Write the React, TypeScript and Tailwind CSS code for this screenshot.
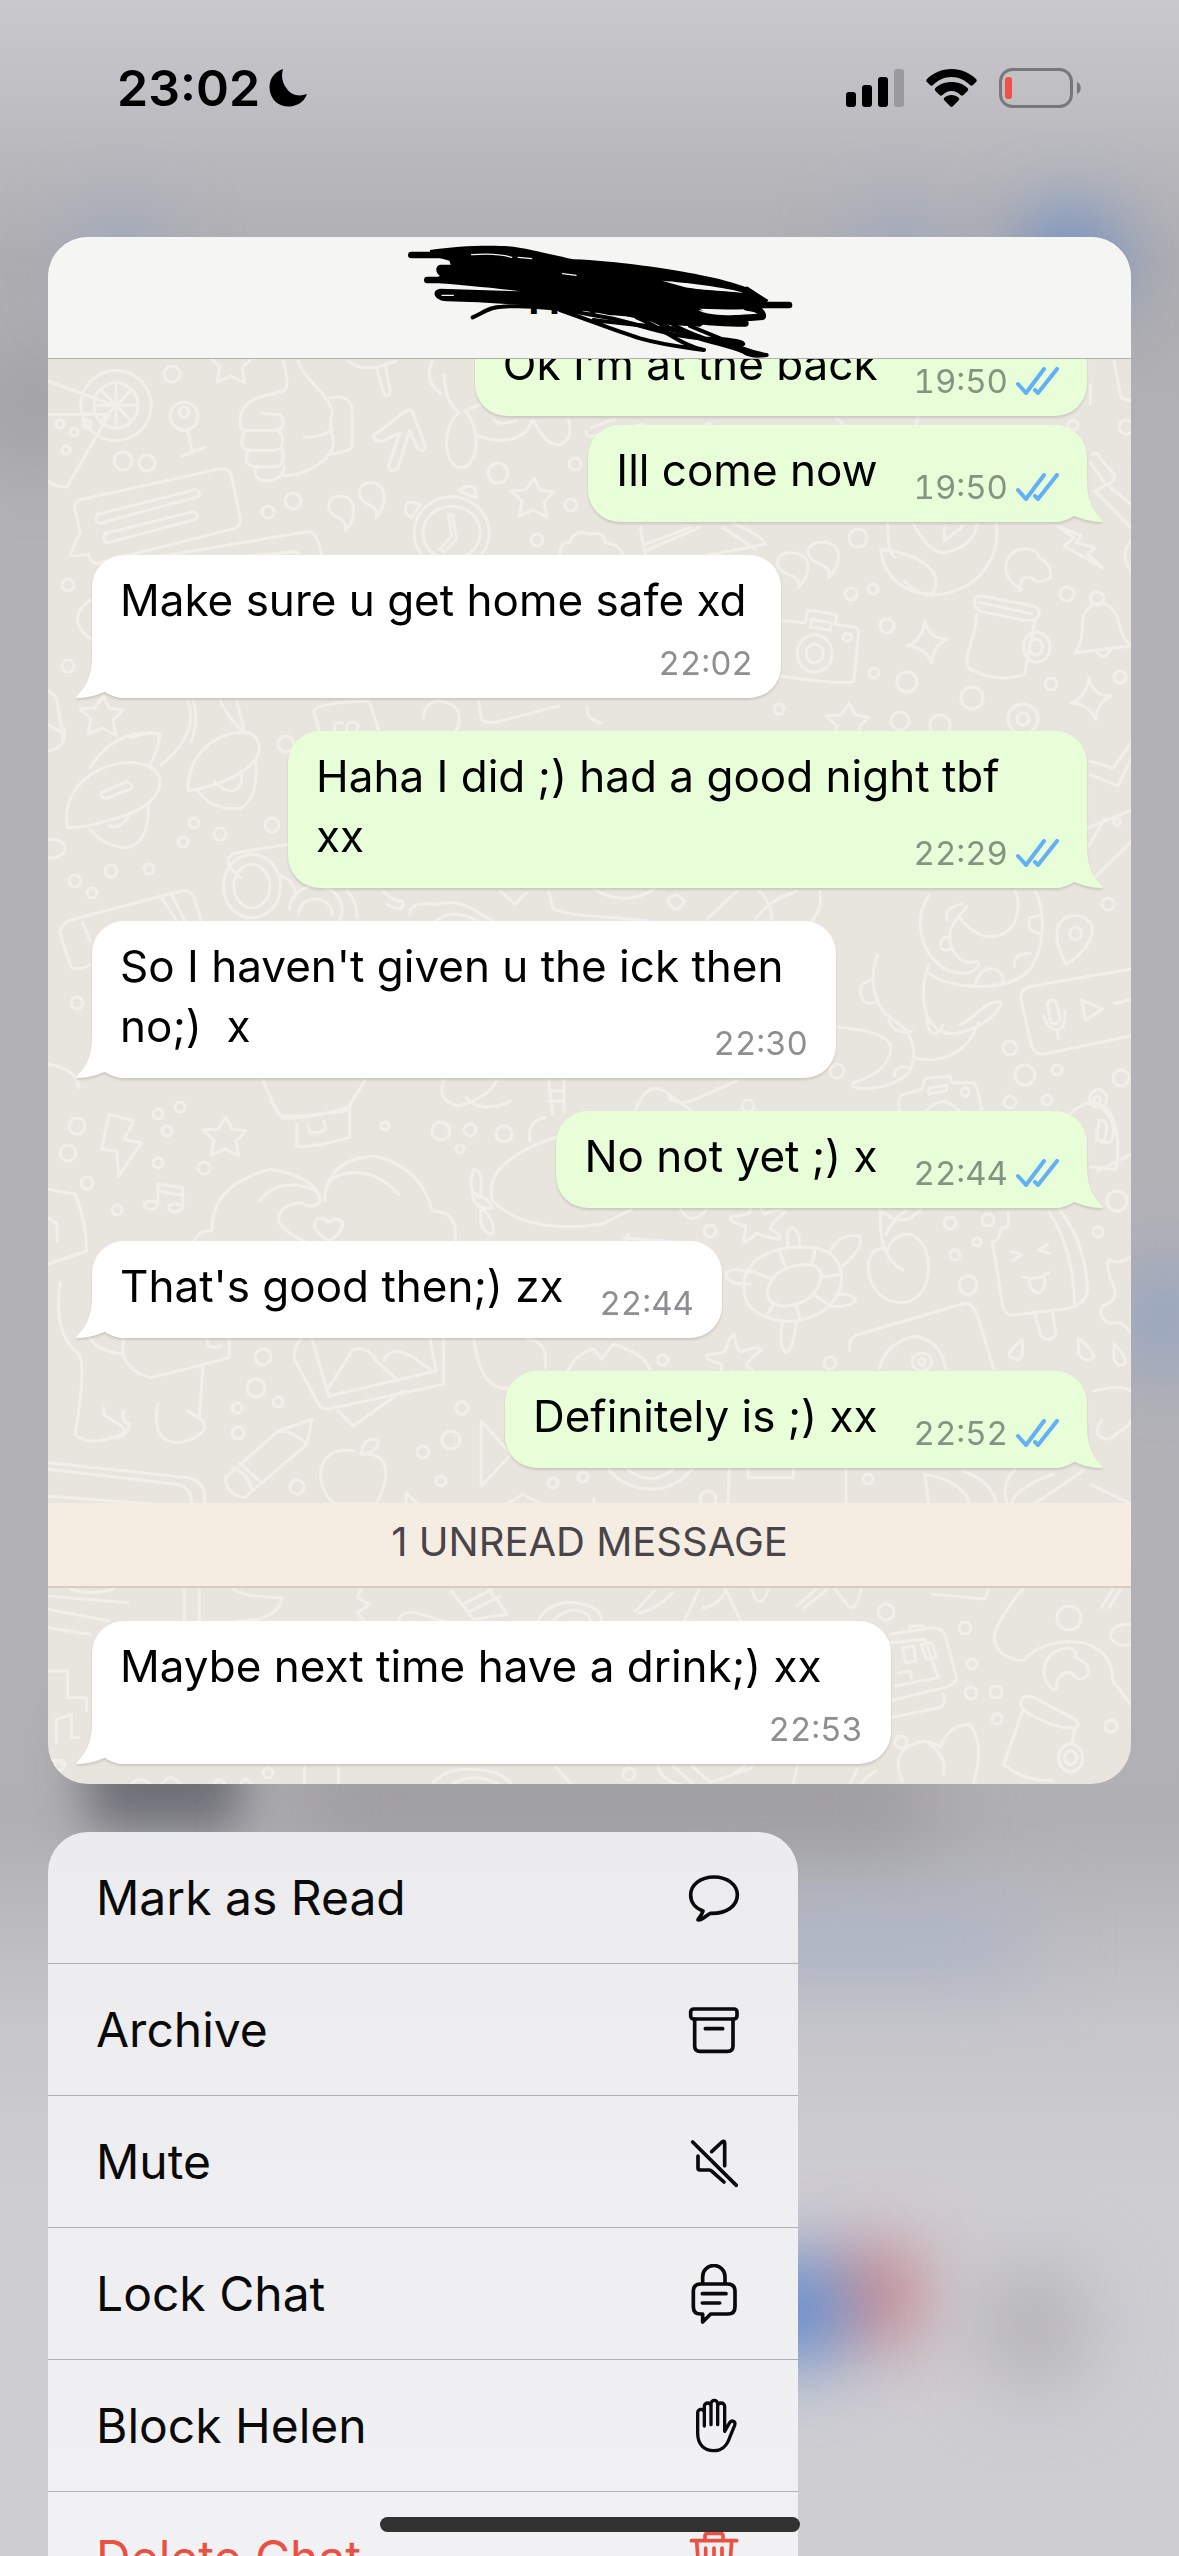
import type { ReactNode } from 'react';
import clsx from 'clsx';

type Layout = 'inline' | 'stacked' | 'wrapped';

interface Message {
  text: string;
  time: string;
  mine?: boolean;
  tail?: boolean;
  layout: Layout;
  className: string;
}

const MESSAGES: Message[] = [
  { text: 'Ok I’m at the back', time: '19:50', mine: true, tail: false, layout: 'inline', className: '-mt-10' },
  { text: 'Ill come now', time: '19:50', mine: true, layout: 'inline', className: 'mt-[9px]' },
  { text: 'Make sure u get home safe xd', time: '22:02', layout: 'stacked', className: 'mt-[33px] w-[689px]' },
  { text: 'Haha I did ;) had a good night tbf xx', time: '22:29', mine: true, layout: 'wrapped', className: 'mt-[33px] w-[799px]' },
  { text: "So I haven't given u the ick then no;)  x", time: '22:30', layout: 'wrapped', className: 'mt-[33px] w-[744px]' },
  { text: 'No not yet ;) x', time: '22:44', mine: true, layout: 'inline', className: 'mt-[33px]' },
  { text: "That's good then;) zx", time: '22:44', layout: 'inline', className: 'mt-[33px]' },
  { text: 'Definitely is ;) xx', time: '22:52', mine: true, layout: 'inline', className: 'mt-[33px]' },
];

const UNREAD: Message = {
  text: 'Maybe next time have a drink;) xx',
  time: '22:53',
  layout: 'stacked',
  className: 'mt-[33px] w-[799px]',
};

/* ---------- status bar ---------- */

function StatusBar() {
  return (
    <div className="flex h-[237px] shrink-0 items-start justify-between pt-[57px] pr-[97px] pl-[117px]">
      <div className="flex h-[62px] items-center gap-2">
        <span className="text-[50px] leading-[62px] font-semibold">23:02</span>
        <svg className="h-10 w-10" viewBox="0 0 40 40" aria-hidden="true">
          <path d="M15 1C3 5-1 17 3 27c4 10 15 14 25 10 6-2 9-6 11-11-8 3-16 1-20-5-5-6-6-13-4-20z" />
        </svg>
      </div>
      <div className="flex h-[62px] items-center gap-[22px]">
        <svg className="h-[38px] w-[58px]" viewBox="0 0 58 38" aria-hidden="true">
          <rect x="0" y="23" width="10" height="15" rx="3" />
          <rect x="16" y="16" width="10" height="22" rx="3" />
          <rect x="32" y="8" width="10" height="30" rx="3" />
          <rect x="48" y="0" width="10" height="38" rx="3" fill="#9a9a9d" />
        </svg>
        <svg className="h-[38px] w-[51px]" viewBox="0 0 51 38" aria-hidden="true">
          <path d="M25.500 0C35 0 44 4 50 10c1 1 1 2 0 3l-3 3c-1 1-2 1-3 0-5-5-11-8-18.500-8S12 11 7 16c-1 1-2 1-3 0l-3-3c-1-1-1-2 0-3C7 4 16 0 25.500 0z" />
          <path d="M25.500 13c6 0 12 2 16 6 1 1 1 2 0 3l-4 4c-1 1-2 1-3 0-2-2-5-4-9-4s-7 2-9 4c-1 1-2 1-3 0l-4-4c-1-1-1-2 0-3 4-4 10-6 16-6z" />
          <path d="M25.500 26c3 0 5 1 7 2.500 1 1 1 2 0 3l-6 6c-1 .7-1.500.7-2 0l-6-6c-1-1-1-2 0-3 2-1.500 4-2.500 7-2.500z" />
        </svg>
        <svg className="h-10 w-[83px]" viewBox="0 0 83 40" aria-hidden="true">
          <rect x="1.500" y="1.500" width="71" height="37" rx="12" fill="none" stroke="#78777c" strokeWidth="3" />
          <path d="M78 14c5 2 5 10 0 12z" fill="#78777c" />
          <rect x="6" y="9" width="7" height="22" rx="3" fill="#ee5244" />
        </svg>
      </div>
    </div>
  );
}

/* ---------- blurred chat list behind the preview ---------- */

function Backdrop() {
  return (
    <div className="absolute inset-0 bg-[linear-gradient(180deg,#c9c8cd_0px,#bdbcc1_120px,#aeadb1_260px,#b2b1b6_500px,#b2b1b6_1500px,#b0afb3_1820px,#c6c5ca_2020px,#cecdd2_2200px,#cecdd2_100%)]">
      <div className="absolute top-[350px] -left-4 h-28 w-24 rounded-full bg-[#9d9da2] blur-2xl" />
      <div className="absolute top-[225px] left-[80px] h-16 w-20 rounded-full bg-[#8ea4c4] blur-2xl" />
      <div className="absolute top-[225px] left-[860px] h-16 w-20 rounded-full bg-[#8fa4c8] blur-2xl" />
      <div className="absolute top-[220px] left-[1030px] h-20 w-20 rounded-full bg-[#3f78cc] blur-2xl" />
      <div className="absolute top-[1270px] -right-8 h-24 w-24 rounded-full bg-[#8ea2c4] blur-2xl" />
      <div className="absolute top-[1720px] left-[85px] h-28 w-[160px] rounded-3xl bg-[#6f7077] blur-xl" />
      <div className="absolute top-[1740px] left-[290px] h-28 w-[640px] rounded-3xl bg-[#9e9da1] blur-2xl" />
      <div className="absolute top-[1914px] left-[700px] h-14 w-[330px] rounded-3xl bg-[#a8b3c8] blur-2xl" />
      <div className="absolute top-[2255px] left-[835px] h-20 w-20 rounded-full bg-[#c4555c] blur-2xl" />
      <div className="absolute top-[2262px] left-[735px] h-24 w-28 rounded-full bg-[#4279cf] blur-2xl" />
      <div className="absolute top-[2270px] left-[985px] h-28 w-24 rounded-full bg-[#aeadb2] blur-2xl" />
    </div>
  );
}

/* ---------- wallpaper ---------- */

// [x, y, radius]
const RINGS = [
  [124, 15, 8], [75, 102, 9], [99, 104, 8], [12, 65, 4], [39, 65, 4], [26, 73, 4], [18, 91, 4], [220, 153, 6],
  [245, 142, 8], [450, 114, 10], [527, 105, 6], [523, 146, 6], [489, 181, 6], [20, 226, 6], [20, 307, 6],
  [810, 179, 9], [803, 235, 6], [825, 230, 5], [839, 267, 7], [859, 323, 10], [826, 314, 5], [924, 339, 11],
  [1003, 325, 6], [1019, 235, 7], [1072, 318, 6], [731, 350, 5], [1025, 66, 5], [1078, 68, 7], [238, 385, 8],
  [146, 464, 5], [172, 475, 6], [135, 483, 5], [224, 466, 7], [63, 512, 6], [101, 510, 5], [27, 522, 6],
  [44, 534, 5], [29, 644, 6], [852, 362, 9], [892, 366, 10], [975, 360, 15], [975, 360, 6], [1060, 545, 6],
  [962, 689, 7], [977, 716, 10], [1009, 711, 5], [962, 743, 6], [999, 741, 5], [789, 712, 7], [700, 747, 6],
  [1069, 842, 10], [662, 872, 6], [902, 864, 6], [940, 861, 6], [929, 883, 4], [907, 896, 5], [920, 926, 9],
  [1050, 873, 5], [782, 1004, 6], [615, 1001, 5], [1073, 719, 8], [29, 767, 8], [110, 755, 5], [132, 748, 5],
  [20, 794, 8], [119, 772, 5], [110, 804, 5], [156, 809, 6], [39, 824, 6], [69, 851, 5], [393, 772, 9],
  [422, 771, 6], [456, 775, 8], [337, 767, 4], [412, 790, 4], [215, 998, 8], [208, 1029, 9], [230, 1043, 5],
  [189, 1049, 5], [190, 1074, 6], [414, 1049, 6], [403, 1081, 9], [375, 1093, 6], [393, 1122, 5],
  [249, 1128, 7], [505, 1124, 5], [535, 1118, 5], [820, 1120, 5], [660, 1140, 8], [838, 1253, 8],
  [917, 1269, 6], [924, 1305, 5], [923, 1334, 6], [948, 1333, 6], [949, 1360, 5], [853, 1383, 6],
  [1063, 1367, 6], [1021, 1259, 12], [581, 1415, 6], [220, 1414, 5], [12, 1406, 5],
];

const STARS = [[484, 139], [182, 5], [53, 357], [799, 364], [176, 778]];
const SPARKLES = [[879, 284], [1043, 341]];
const STARFISH = [[707, 862], [683, 1000]];

function Doodles({ transform, paths }: { transform: string; paths: string[] }) {
  return (
    <g transform={transform} className="*:[vector-effect:non-scaling-stroke]">
      {paths.map((d) => (
        <path key={d} d={d} />
      ))}
    </g>
  );
}

const COMMA = 'c5-25-10-35-20-40c-35-15-30-65 5-65c45 0 45 65 15 105z';

function Wallpaper() {
  return (
    <svg
      className="absolute inset-0 h-full w-full"
      viewBox="0 0 1083 1426"
      preserveAspectRatio="xMidYMin slice"
      fill="none"
      stroke="#f2efea"
      strokeWidth="3"
      strokeLinecap="round"
      strokeLinejoin="round"
      aria-hidden="true"
    >
      {RINGS.map(([x, y, r]) => (
        <circle key={`${x}-${y}-${r}`} cx={x} cy={y} r={r} />
      ))}
      {STARS.map(([x, y]) => (
        <path key={x} transform={`translate(${x} ${y})`} d="M2-20 8-8 22-6 12 4 15 19 1 12-13 18-10 3-21-7-6-8z" />
      ))}
      {SPARKLES.map(([x, y]) => (
        <path key={x} transform={`translate(${x} ${y})`} d="M-2-22Q2-4 20-4 6 2 5 20-2 4-20 3-5-2-2-22z" />
      ))}
      {STARFISH.map(([x, y]) => (
        <path key={x} transform={`translate(${x} ${y})`} d="M3-25Q6-8 10-7 28-14 30-9 14 4 16 8 30 16 24 18 8 16 2 12-12 24-12 20-8 8-10 5-28 0-24-4-8-6-6-8-2-22 3-25z" />
      ))}

      {/* fruit, thumb, speech card, alarm clock */}
      <Doodles
        transform="translate(-48 2) scale(.3827 .3333)"
        paths={[
          'M125 60 290 130M125 160H285L175 378Q150 380 125 360',
          'M211 133a92 105 0 1 1 0 1M245 133a58 68 0 1 1 0 1M303 70V195M245 133H360M262 85 345 182M345 85 262 182',
          'M445 165a36 42 0 1 1 0 1M469 152a12 16 0 1 1 0 1M490 208 502 270M475 285 535 260',
          'M780 0C790 50 850 90 865 140M740 0Q760 80 740 90C690 105 640 110 628 165V190Q625 205 640 208H720Q742 205 740 180 740 160 715 160L680 157',
          'M640 208Q620 260 650 268H720Q742 265 738 235 740 215 720 208M650 268Q630 310 665 317H725Q745 310 738 268M668 318Q660 360 700 360 745 350 742 318',
          'M742 345C820 340 880 280 870 230Q860 200 868 150M795 228Q840 230 868 205M860 110Q920 100 920 150V250Q920 275 865 278',
          'M975 225 1060 150Q1075 140 1080 160L1112 255Q1105 280 1090 260L1070 210 1040 320Q1020 340 1015 315L1045 215 1000 240Q980 245 975 225z',
          'M195 440Q195 420 215 415L570 325Q600 320 605 345L628 475Q628 500 605 505L260 605Q240 615 232 580L185 585Q180 580 210 515z',
          'M255 460 510 386Q525 390 520 406L262 487Q245 485 255 460zM275 517 505 452Q520 458 513 475L282 545Q265 540 275 517z',
          'M400 590 800 512Q830 505 840 585M600 590 770 572Q785 575 780 590',
          `M903 510${COMMA}`,
          `M983 470${COMMA}`,
          'M1082 515a98 108 0 1 1 0 1M1105 515a75 80 0 1 1 0 1M1172 460 1180 525 1150 565 1162 572 1193 535 1182 460z',
          'M1060 455Q1055 425 1075 423L1098 430 1075 472zM1200 390Q1215 370 1240 380L1245 410z',
          'M910 0Q950 40 1035 0M985 25 1003 98Q1012 110 1020 95L1008 20',
          'M1130 0Q1105 60 1150 95M1160 40Q1165 130 1200 155M1200 155C1150 200 1160 320 1205 320S1260 200 1215 150L1255 130M1250 225C1310 250 1370 240 1390 180M1395 180Q1430 260 1465 250 1500 230 1485 175M1290 178Q1310 195 1350 178',
          'M240 715C190 750 190 800 240 835M125 990Q150 1000 152 1040L165 1140M125 1090 160 1115M340 1130Q420 1105 418 1125L415 1140M505 1018Q520 1080 500 1140M575 1018Q600 1080 640 1115M820 1050Q825 1025 965 1020L990 1110M820 1050 835 1115M875 1110Q870 1080 895 1085M905 1110Q905 1075 932 1085 940 1100 930 1115',
          'M1105 1075Q1110 1018 1150 1020 1200 1030 1200 1070 1200 1110 1180 1115M1250 1018 1258 1075Q1265 1085 1290 1085L1460 1035M1535 1040Q1530 1075 1570 1085',
        ]}
      />

      {/* camera, mug, bell */}
      <Doodles
        transform="translate(392 -18) scale(.4713 .3333)"
        paths={[
          'M722 838 775 845 780 810Q785 805 842 822L838 850 880 858Q890 865 888 880L878 1020Q870 1035 722 1005',
          'M758 937a37 56 0 1 1 0 1M777 937a18 28 0 1 1 0 1M788 835 830 845 828 868 786 858zM855 888a9 12 0 1 1 0 1',
          'M1135 785Q1130 765 1150 765L1260 795Q1275 805 1270 825 1262 842 1240 838L1150 812Q1135 805 1135 785zM1145 785 1255 818M1138 820C1140 880 1110 940 1120 980Q1180 1030 1240 1000L1262 840',
          'M1238 918a28 45 0 1 1 0 1M1250 918a14 24 0 1 1 0 1',
          'M1348 935C1375 880 1350 830 1380 795Q1400 775 1425 800C1450 840 1435 880 1466 915zM1395 935Q1410 960 1422 928M1380 772a14 20 0 1 1 0 1',
          `M760 740${COMMA}`,
          `M825 708${COMMA}`,
          'M950 545C950 600 955 640 965 650M985 720Q1020 770 1050 762C1150 750 1190 640 1180 545M935 625C940 700 980 760 1045 758 1070 700 1030 640 935 625zM1005 550Q1040 640 1070 635 1130 620 1140 550M1070 600V560M1070 600 1110 555',
          'M1310 555 1360 585 1350 605 1390 620 1375 640 1405 680 1325 615 1345 590z',
          'M1235 745C1190 720 1190 640 1230 625Q1270 620 1270 650 1300 670 1295 710 1270 735 1255 710 1230 700 1230 750z',
          'M255 640Q255 600 275 605 285 560 320 580 350 570 350 605 385 610 388 645M425 560 435 640M435 610 530 560M435 630 550 560M600 560 670 625M620 545Q690 590 690 610L560 645',
          'M1385 340Q1395 330 1400 350L1430 400Q1435 420 1415 430L1390 450M1380 365 1410 425M1390 450 1466 560M1415 430 1466 490M1380 190V130M1430 60 1445 170 1466 180',
          'M310 270Q310 290 330 285L430 250M320 260 370 235M840 230 855 250M1010 250 1015 230M560 260Q570 235 580 260M1466 600Q1440 640 1466 690',
        ]}
      />

      {/* rocket, leaves, lens */}
      <Doodles
        transform="translate(-48 342) scale(.7519 .3333)"
        paths={[
          'M90 380C80 280 120 180 180 185 230 200 220 300 170 340Q120 380 90 380zM120 200Q150 90 205 95 220 100 200 190M135 275 168 242Q178 250 174 264L142 292Q132 290 135 275M120 385Q140 440 170 440 200 420 197 310M145 375Q160 390 172 340',
          'M250 270C250 150 290 90 330 95 360 120 350 230 250 270zM262 265Q280 330 320 322 345 290 340 170M285 240Q300 280 315 265 325 240 320 210M250 0Q265 100 215 190M315 0 325 90M64 150Q90 140 85 80',
          'M305 500Q300 460 315 455L383 430M305 500 320 530M297 555a38 95 0 1 1 0 1M311 555a24 65 0 1 1 0 1M370 520Q395 540 392 590M385 625a35 70 0 0 1 70 0Q455 650 450 660M397 640a22 45 0 0 1 45 0M64 415Q90 415 86 450 80 475 64 470',
          'M80 700Q78 680 90 660L240 570Q255 565 258 590L268 660M215 590 235 660M228 580 246 660M80 700 95 800Q105 810 122 790M110 665 120 720',
          'M462 570Q475 600 475 650M510 570Q520 600 535 600 540 640 515 610M545 640Q545 600 580 610 610 590 640 640L655 660M580 660Q600 620 635 660M665 570 685 610 700 575M730 570 735 620Q740 640 820 650L860 660M790 565Q830 620 870 565M890 590Q900 570 910 600 900 650 888 600zM940 655 980 570M1005 655Q1020 600 1060 570M1010 570Q1030 620 1025 655M1090 570Q1095 620 1080 660',
          'M64 1090Q100 1100 105 1160M350 1140 370 1240Q375 1255 460 1230L485 1140M590 1140Q580 1200 610 1215 650 1190 660 1140M620 1190Q640 1240 680 1200M730 1140 735 1240M750 1140V1230M730 1170H750M730 1200H750M845 1230Q860 1130 890 1180L920 1230M890 1190Q900 1220 930 1190L980 1140',
        ]}
      />

      {/* dinosaur, pin, voice note, turtle, ice lolly */}
      <Doodles
        transform="translate(592 322) scale(.3438 .4464)"
        paths={[
          'M840 480C790 540 820 620 900 650 960 665 1000 640 980 628 930 640 900 600 900 570 905 540 930 530 950 505M930 530C990 590 1060 580 1090 540Q1110 500 1090 470M840 655C900 690 1060 700 1130 650 1180 600 1180 520 1150 470',
          'M840 635C810 700 820 780 900 790 980 790 1050 740 1050 720 1010 710 970 760 930 770M690 615C660 680 690 740 740 760 800 790 810 840 780 880 720 920 600 920 620 900 660 890 730 870 730 820 720 790 650 780 570 775M800 845C900 860 960 820 985 765',
          'M895 535Q880 510 935 500M905 600Q870 610 875 585 880 570 905 575M975 680Q990 640 1030 645 1060 650 1055 680M1090 640Q1080 610 1135 610M1160 565Q1120 560 1135 530L1165 525M835 755Q835 790 860 790 880 780 880 770M670 670Q630 680 645 710 660 730 690 718M725 760Q730 790 790 785M740 885Q740 860 780 865',
          'M1240 635C1200 580 1200 530 1265 525 1340 530 1330 590 1240 635zM1250 565a17 14 0 1 1 0 1',
          'M1428 645 1130 685Q1100 695 1110 720L1140 820Q1150 840 1180 835L1428 795M1185 725Q1190 710 1210 718L1222 755Q1215 775 1195 765zM1175 750Q1190 790 1225 778 1240 765 1235 740M1212 782 1218 800M1285 715 1345 735 1295 760zM1380 722 1428 714',
          'M755 965Q745 930 770 925L820 915 830 890 900 885 910 900 970 900Q980 900 995 965M830 965Q880 920 930 965M840 912 895 905 890 918 840 925zM935 920a11 9 0 1 1 0 1',
          'M1250 970Q1320 920 1370 970 1400 1020 1385 1095L1310 1088M1335 985Q1370 980 1350 1030H1328zM1308 935a25 20 0 1 1 0 1M1320 938a10 8 0 1 1 0 1',
          'M303 1370C290 1290 400 1260 510 1270 590 1280 600 1340 570 1380 530 1430 450 1440 400 1432 330 1420 310 1400 303 1370zM370 1370C380 1320 440 1305 500 1308 550 1320 520 1370 480 1388 420 1410 370 1400 370 1370z',
          'M320 1320 385 1340M405 1275 425 1315M510 1272 500 1308M585 1330 530 1335M550 1398 505 1375M465 1432 455 1400M370 1420 390 1395M430 1270 428 1240Q440 1210 462 1240L465 1268M550 1280Q590 1230 640 1245 650 1270 590 1310M318 1350Q260 1355 250 1330 260 1310 325 1325M570 1375Q620 1370 628 1390 600 1405 550 1400M415 1435Q400 1490 425 1505 445 1500 455 1435',
          'M720 1275C640 1250 640 1390 760 1393 860 1390 860 1260 790 1240Q740 1235 720 1275M700 1185Q690 1290 765 1320M775 1185Q730 1210 715 1240',
          'M1070 1190Q1080 1230 1050 1225 1040 1260 1025 1255L1055 1400Q1065 1425 1090 1420L1250 1405Q1310 1390 1300 1350 1290 1250 1220 1185M1190 1190Q1260 1270 1265 1400M1150 1420 1165 1465Q1185 1485 1210 1465L1200 1415',
          'M1080 1278 1110 1285 1085 1298M1185 1262 1160 1275 1190 1282M1115 1335Q1150 1345 1190 1325M1130 1338Q1135 1370 1160 1370 1185 1360 1175 1332',
          'M610 1500Q605 1475 630 1465L940 1395Q970 1390 985 1430L1030 1545M695 1540Q720 1480 800 1468 880 1480 890 1545M792 1525a28 20 0 1 1 0 1M810 1525a10 8 0 1 1 0 1',
          'M1110 1475Q1120 1520 1095 1520 1065 1515 1078 1500zM1275 1472Q1320 1500 1320 1515 1290 1530 1275 1505zM1380 1485Q1420 1520 1410 1530 1385 1540 1378 1515zM1428 1290Q1390 1310 1365 1295 1350 1310 1380 1360 1390 1390 1345 1400 1330 1430 1370 1440 1400 1430 1428 1460',
          'M1310 180 1375 195 1428 140M1310 210 1390 235 1428 175M1300 330 1428 290M1305 370 1350 310M1310 450 1428 360M1378 315a10 8 0 1 1 0 1',
        ]}
      />

      {/* bolt, notes, heart hands, cat, pencil */}
      <Doodles
        transform="translate(-48 742) scale(.7519 .3333)"
        paths={[
          'M145 40 178 60 165 115 188 125 158 225 155 150 135 145z',
          'M210 310V250L243 260V320M210 270 243 283M192 312a9 12 0 1 1 0 1M224 320a9 12 0 1 1 0 1',
          'M258 420Q265 385 282 390 280 250 360 205 420 230 425 290M345 300Q365 240 400 255 430 265 425 305 415 325 400 305 370 310 370 360 380 400 410 425M432 280Q440 170 500 165 560 200 575 330 610 330 605 420M432 300Q430 210 480 215 510 225 530 280M437 420Q410 380 422 355 432 345 437 365 448 345 456 365 455 400 437 420z',
          'M745 105Q640 180 655 300 700 400 800 370L840 325M705 120Q700 60 725 50M630 205Q645 210 638 290 620 270 630 205zM628 275Q650 290 655 320 630 330 628 275zM640 320Q660 360 655 400 635 390 640 320z',
          'M64 265 100 280Q115 360 115 450L64 490M64 350 76 370V420M395 70V130Q385 145 430 130L465 110V20M410 75 412 95Q440 100 430 60M360 0 375 50Q400 60 460 20',
          'M80 545Q70 700 105 760 115 800 100 1000 115 1035 150 1010 180 990 150 960L138 940V920M165 930Q160 960 172 970 170 1010 150 1010M210 910Q200 1030 240 1025 280 1000 270 960L250 930M270 800 265 950M165 713Q155 800 200 830 240 810 305 770V713M120 713Q130 750 165 760M275 713Q275 750 295 735',
          'M400 713Q385 760 395 790L425 915Q430 930 445 920L590 850V713M415 713 437 885 580 810 572 713M437 860 470 745Q490 735 500 780L530 840M510 780Q520 730 550 770L572 805M450 930 470 975 535 870M630 713Q640 880 680 860M700 713Q730 720 725 800M755 810Q770 750 790 745L800 775 815 730Q860 760 865 810',
          'M300 1130 370 990 415 955 408 1030 325 1190Q300 1180 300 1130zM310 1100Q330 1120 335 1165M370 990Q390 990 408 1030M318 1085 345 1140',
          'M470 1050C420 1030 415 1150 445 1209H500C520 1130 520 1050 480 1060M480 1060Q485 1000 503 1020 505 1050 480 1060',
          'M64 1085 250 1130Q275 1140 272 1209M64 1105 235 1150Q255 1160 255 1209M64 1185 200 1209M640 960 680 1060 640 1155zM540 1209V1175L555 1209M675 1209 695 1180 720 1209M790 1190V1209',
          'M810 1105Q830 1165 870 1165 900 1160 920 1105M835 1105Q865 1160 895 1105M970 1105 968 1209M995 1105V1130H1055V1105M1125 1105V1209M1230 1120Q1280 1140 1290 1209M1235 1209 1230 1120M1280 1110Q1320 1140 1325 1209M1350 1105Q1330 1150 1340 1209M1400 1120Q1350 1160 1345 1209M1375 1209 1440 1110M1455 870Q1490 850 1504 870M1465 960Q1450 1010 1475 1015 1500 980 1504 960M1450 1150 1504 1209',
          'M1455 0Q1490 60 1478 120 1460 140 1458 90M1460 210 1504 160M905 325Q920 380 940 325M1170 325Q1200 390 1225 325M830 410 910 425M835 400 832 420',
        ]}
      />

      {/* guitar, phone, cup */}
      <Doodles
        transform="translate(-48 1122) scale(.7519 .3333)"
        paths={[
          'M245 325V415M265 325V420M310 325Q330 350 375 350 370 420 315 420M95 325Q120 345 150 325M64 345 170 365M64 385 145 420M64 440 120 460M480 325 475 350 492 370 475 395 485 420M530 420Q535 380 560 400L590 420M600 330 630 415 675 400 650 325M615 370 655 325M622 395 665 345M715 420Q730 360 765 365 800 375 800 420M735 420Q750 385 765 387 785 395 785 420',
          'M845 390 870 330M850 395Q870 390 895 335M930 325 910 420M935 380Q960 370 965 325L985 420M1000 325Q1010 400 1022 325M1060 375 1085 325M1070 380 1100 325M1110 325 1130 380Q1140 385 1145 325M1240 340 1310 355 1315 325',
          'M1360 325Q1325 420 1322 470 1325 530 1360 540 1390 470 1440 485 1480 510 1480 600L1504 670M1504 430Q1475 430 1477 470 1485 500 1504 490M1465 380 1480 325M1475 380 1490 325',
          'M1184 460 1240 440Q1255 440 1258 470L1272 590Q1272 610 1255 620L1184 660M1184 485 1230 475 1248 590 1190 615M1184 710 1250 680Q1258 670 1255 640M1210 445V435H1228V445M1200 500 1215 495 1218 540 1205 545zM1225 490 1240 485 1245 530 1232 535zM1195 575 1210 570 1212 595',
          'M1400 625C1380 590 1385 510 1420 500Q1435 510 1430 530 1450 545 1448 580 1435 610 1425 575 1405 570 1405 625z',
          'M1358 660Q1360 640 1375 650L1430 715Q1440 740 1425 742 1400 740 1370 700 1355 680 1358 660zM1360 690 1335 850Q1360 900 1400 900M1430 740 1425 790M1408 830a16 42 0 1 1 0 1M1416 830a8 20 0 1 1 0 1',
          'M1200 900Q1180 800 1230 780 1250 790 1250 800 1262 730 1290 730 1310 790 1295 905M1235 785Q1260 830 1255 880',
          'M64 570H90V650H115V690M75 785V715L95 700V770H105M64 840Q80 830 85 860M175 911Q185 880 200 911M215 911Q225 870 240 911M285 911Q290 880 300 911M320 911Q325 880 335 911M405 860V911M450 911V860M575 911Q590 860 630 865 670 870 680 911M600 911Q630 870 665 911M760 911 740 860M875 855Q880 900 905 911M920 855 945 905 1000 860M895 855 920 905M975 880 990 855M1060 855 1055 911M1130 911 1140 865M1165 870Q1150 890 1145 911',
        ]}
      />
    </svg>
  );
}

/* ---------- bubbles ---------- */

function Ticks() {
  return (
    <svg
      className="h-7 w-[43px]"
      viewBox="0 0 43 28"
      fill="none"
      stroke="#62b0f5"
      strokeWidth="4"
      strokeLinecap="round"
      strokeLinejoin="round"
      aria-label="Read"
    >
      <path d="M2 17 10 26 28 2" />
      <path d="M19 23 22 26 41 2" />
    </svg>
  );
}

function Tail({ mine }: { mine?: boolean }) {
  return (
    <svg
      className={clsx(
        'absolute bottom-0 h-11 w-12',
        mine ? '-right-4 -scale-x-100 fill-[#e7fed8]' : '-left-4 fill-white',
      )}
      viewBox="0 0 48 44"
      aria-hidden="true"
    >
      <path d="M16 0C16 18 13 30 1 42 0 43 0 44 1 44 12 44 22 41 30 37 34 41 41 44 48 44V0z" />
    </svg>
  );
}

function Bubble({ message }: { message: Message }) {
  const { text, time, mine, tail = true, layout, className } = message;
  return (
    <li
      className={clsx(
        'relative flex max-w-[800px] rounded-[32px] px-7 py-[15px] drop-shadow-[0_2px_1px_rgba(60,50,40,0.16)]',
        mine ? 'self-end bg-[#e7fed8]' : 'self-start bg-white',
        layout === 'inline' ? 'items-end gap-9' : 'flex-col',
        className,
      )}
    >
      {tail && <Tail mine={mine} />}
      <p className="relative mb-[7px] text-[44px] leading-[60px] whitespace-pre-wrap">{text}</p>
      <div
        className={clsx(
          'relative flex h-10 items-center gap-2 self-end',
          layout === 'stacked' && 'mt-1.5',
          layout === 'wrapped' && '-mt-10',
        )}
      >
        <time className={clsx('text-[33px] leading-10 tabular-nums', mine ? 'text-[#849480]' : 'text-[#8e8e93]')}>
          {time}
        </time>
        {mine && <Ticks />}
      </div>
    </li>
  );
}

function Scribble() {
  return (
    <svg
      className="absolute top-0 h-[121px] w-[420px]"
      viewBox="0 21 1260 363"
      fill="none"
      stroke="#000"
      strokeWidth="20"
      strokeLinecap="round"
      strokeLinejoin="round"
      aria-hidden="true"
    >
      <path
        fill="#000"
        stroke="none"
        d="M150 60C230 48 330 44 400 50 470 60 530 78 580 88 700 92 880 118 960 135 1040 150 1110 172 1130 188L1165 210 1150 235C1100 240 1030 238 960 236L1000 262 960 290 860 284C780 268 740 256 690 256 620 240 560 240 500 232 400 222 300 216 200 214 160 212 152 180 180 176L420 184C330 172 250 166 140 156L180 138C165 128 165 108 180 104L212 104 208 92 150 76z"
      />
      <path d="M94 75H240M142 150H300M1120 225H1227M1150 215 1100 180" />
      <path d="M920 245C1000 265 1080 268 1148 260 1150 245 1130 235 1100 232M880 262C960 275 1040 282 1096 280" />
      <path strokeWidth="12" d="M278 262C310 248 330 230 365 230 500 222 600 250 700 266 800 290 900 330 1010 326 1060 330 1090 335 1090 342 1040 350 960 325 880 285" />
      <path strokeWidth="12" d="M540 240C640 275 700 300 780 325 850 345 900 350 972 360 900 345 860 300 770 262M640 270C760 285 880 290 940 320 1000 340 1040 345 1090 365 1110 380 1140 378 1160 375 1120 370 1060 345 1020 325L930 288M800 262C860 290 900 310 960 320" />
      <path stroke="#f5f5f3" strokeWidth="4" d="M275 74C330 70 370 74 395 82M415 82 455 86M548 131 588 136M186 196H220" />
      <path fill="#f5f5f3" stroke="none" d="M846 152C920 158 1040 172 1090 188 1020 182 940 178 910 170z" />
      <path fill="#f5f5f3" stroke="none" d="M955 240C1010 248 1060 250 1100 244 1120 250 1080 256 1040 256 1000 254 970 250 955 240z" />
    </svg>
  );
}

/* ---------- context menu ---------- */

function MenuIcon({ children }: { children: ReactNode }) {
  return (
    <svg
      className="h-[60px] w-[60px]"
      viewBox="0 0 180 180"
      fill="none"
      stroke="currentColor"
      strokeWidth="11"
      strokeLinecap="round"
      strokeLinejoin="round"
      aria-hidden="true"
    >
      {children}
    </svg>
  );
}

const MENU: { label: string; icon: ReactNode; danger?: boolean }[] = [
  {
    label: 'Mark as Read',
    icon: <path d="M80 136C68 140 58 155 43 156 38 156 52 146 57 129 34 121 20 103 20 81 20 50 50 27 90 27S160 50 160 81 130 137 80 136z" />,
  },
  {
    label: 'Archive',
    icon: (
      <>
        <rect x="20" y="27" width="139" height="30" rx="9" />
        <path d="M32 58V138Q32 154 48 154H131Q147 154 147 138V58M64 86H116" />
      </>
    ),
  },
  {
    label: 'Mute',
    icon: <path d="M26 30 157 160M42 72V108Q42 114 48 114H76Q80 114 84 118L120 150M83 59 114 30Q122 24 122 34V101" />,
  },
  {
    label: 'Lock Chat',
    icon: <path d="M56 58V38A33.500 33.500 0 0 1 123 38V58M50 60H131Q153 60 153 82V128Q153 150 131 150H80L56 174V150H50Q28 150 28 128V82Q28 60 50 60zM55 89H126M55 117H107" />,
  },
  {
    label: 'Block Helen',
    icon: (
      <path
        strokeWidth="10"
        d="M61 90V50A10 10 0 0 0 41 50V112C41 145 60 164 89 164 118 164 130 146 138 122L152 88C156 76 143 70 137 80L122 106V31A10.500 10 0 0 0 101 31V86M61 50V31A10 10 0 0 1 81 31V86M81 31V23A10 10 0 0 1 101 23V31"
      />
    ),
  },
  {
    label: 'Delete Chat',
    danger: true,
    icon: <path d="M22 38H158M63 36V24Q63 16 71 16H109Q117 16 117 24V36M38 40 46 150Q47 164 61 164H120Q134 164 135 150L143 40M65 60V140M90 60V140M114 60V140" />,
  },
];

function ContextMenu() {
  return (
    <ul className="mt-12 ml-12 w-[750px] divide-y divide-[#b0b0b4] overflow-hidden rounded-t-[40px] bg-linear-to-b from-[#ececee] to-[#f1f1f4]">
      {MENU.map(({ label, icon, danger }) => (
        <li key={label}>
          <button
            type="button"
            className={clsx(
              'flex h-[131px] w-full items-center justify-between pr-[54px] pl-12 text-[48px] leading-[60px]',
              danger ? 'text-[#ea5145]' : 'text-[#0a0a0b]',
            )}
          >
            {label}
            <MenuIcon>{icon}</MenuIcon>
          </button>
        </li>
      ))}
    </ul>
  );
}

export default function App() {
  return (
    <div className="relative h-screen overflow-hidden font-['Inter',sans-serif] text-black">
      <Backdrop />
      <main className="relative flex h-full flex-col">
        <StatusBar />

        <section className="mx-12 shrink-0 overflow-hidden rounded-[40px] bg-[#e8e5df]">
          <header className="relative z-10 flex h-[122px] items-center justify-center border-b border-[#b1b0ad] bg-[#f5f5f3]">
            <h1 className="text-[44px] leading-[60px] font-semibold">Helen</h1>
            <Scribble />
          </header>
          <div className="relative overflow-hidden pb-[19px]">
            <Wallpaper />
            <ul className="relative flex flex-col px-11">
              {MESSAGES.map((message) => (
                <Bubble key={message.text} message={message} />
              ))}
            </ul>
            <p className="relative mt-[35px] h-[85px] border-b-2 border-[#d9cdc1] bg-[#f6ede2] pt-[13px] text-center text-[40px] leading-[52px] text-[#48454a]">
              1 UNREAD MESSAGE
            </p>
            <ul className="relative flex flex-col px-11 pb-px">
              <Bubble message={UNREAD} />
            </ul>
          </div>
        </section>

        <ContextMenu />
      </main>
      <div className="absolute bottom-6 left-1/2 h-[15px] w-[420px] -translate-x-1/2 rounded-full bg-[#323232]" />
    </div>
  );
}
